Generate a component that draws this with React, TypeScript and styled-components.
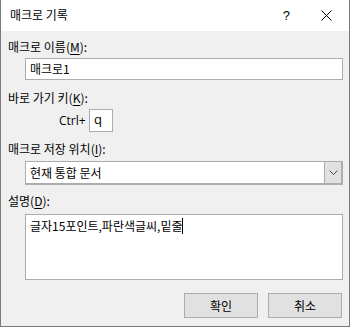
import React from 'react';
import styled, { createGlobalStyle } from 'styled-components';

// * global
const GlobalStyle = createGlobalStyle`
  html, body {
    margin: 0;
    padding: 0;
    background: #ffffff;
  }
  body {
    font-family: "Noto Sans CJK KR", "Noto Sans", sans-serif;
    font-size: 12px;
    color: #000000;
  }
`;

// * component
function App() {
  return (
    <>
      <GlobalStyle />
      <Window>
        <TitleBar>
          <Title>매크로 기록</Title>
          <TitleButtons>
            <HelpBtn>?</HelpBtn>
            <CloseBtn>
              <svg width='11' height='11' viewBox='0 0 11 11'>
                <path d='M0.5 0.5 L10.5 10.5 M10.5 0.5 L0.5 10.5' stroke='#000' strokeWidth='1' />
              </svg>
            </CloseBtn>
          </TitleButtons>
        </TitleBar>

        <Body>
          {/* 매크로 이름 */}
          <Label top={8}>
            매크로 이름(<u>M</u>):
          </Label>
          <TextBox top={3}>매크로1</TextBox>

          {/* 바로 가기 키 */}
          <Label top={10}>
            바로 가기 키(<u>K</u>):
          </Label>
          <ShortcutRow>
            <CtrlText>Ctrl+</CtrlText>
            <KeyBox>q</KeyBox>
          </ShortcutRow>

          {/* 저장 위치 */}
          <Label top={9}>
            매크로 저장 위치(<u>I</u>):
          </Label>
          <Select>
            <SelectValue>현재 통합 문서</SelectValue>
            <SelectArrow>
              <svg width='9' height='5' viewBox='0 0 9 5'>
                <path d='M0.5 0.5 L4.5 4.5 L8.5 0.5' stroke='#444' strokeWidth='1' fill='none' />
              </svg>
            </SelectArrow>
          </Select>

          {/* 설명 */}
          <Label top={8}>
            설명(<u>D</u>):
          </Label>
          <MemoBox>
            글자15포인트,파란색글씨,밑줄<Caret />
          </MemoBox>

          <ButtonRow>
            <Button>확인</Button>
            <Button>취소</Button>
          </ButtonRow>
        </Body>
      </Window>
    </>
  );
}
export default App;

// * styles
// 대화상자 창
const Window = styled.div`
  box-sizing: border-box;
  width: 350px;
  height: 327px;
  display: flex;
  flex-direction: column;
  background: #f0f0f0;
  border: 1px solid #7a7a7a;
  border-top: none;
`;
// 제목 표시줄
const TitleBar = styled.div`
  height: 31px;
  flex-shrink: 0;
  display: flex;
  align-items: center;
  justify-content: space-between;
  background: #ffffff;
  padding-left: 9px;
`;
const Title = styled.span`
  font-size: 12px;
  line-height: 16px;
  margin-top: -1px;
`;
const TitleButtons = styled.div`
  display: flex;
  align-items: center;
  height: 100%;
`;
const HelpBtn = styled.span`
  width: 47px;
  font-family: "Liberation Sans", sans-serif;
  font-size: 13px;
  text-align: right;
  padding-right: 13px;
  margin-top: -1px;
`;
const CloseBtn = styled.span`
  width: 46px;
  display: flex;
  justify-content: center;
  align-items: center;
  margin-top: -1px;
  svg {
    display: block;
  }
`;
// 본문
const Body = styled.div`
  flex: 1;
  display: flex;
  flex-direction: column;
  padding: 0 6px 0 7px;
`;
const Label = styled.div<{ top: number }>`
  margin-top: ${({ top }) => top}px;
  line-height: 16px;
  height: 16px;
  white-space: nowrap;
  u {
    text-underline-offset: 2px;
  }
`;
// 입력 상자
const TextBox = styled.div<{ top: number }>`
  box-sizing: border-box;
  margin: ${({ top }) => top}px 0 0 17px;
  height: 22px;
  border: 1px solid #adadad;
  background: #ffffff;
  padding-left: 4px;
  line-height: 20px;
`;
const ShortcutRow = styled.div`
  display: flex;
  align-items: center;
  margin-top: 3px;
  padding-left: 51px;
`;
const CtrlText = styled.span`
  font-family: "Open Sans", sans-serif;
  font-size: 12px;
  width: 30px;
`;
const KeyBox = styled.div`
  box-sizing: border-box;
  width: 24px;
  height: 23px;
  border: 1px solid #adadad;
  background: #ffffff;
  padding-left: 4px;
  line-height: 19px;
  font-family: "Open Sans", sans-serif;
  font-size: 13px;
`;
// 선택 상자
const Select = styled.div`
  box-sizing: border-box;
  display: flex;
  margin: 4px 0 0 17px;
  height: 24px;
  border: 2px solid #adadad;
  border-left-width: 1px;
  border-top-width: 1px;
  background: #ffffff;
`;
const SelectValue = styled.div`
  flex: 1;
  padding-left: 4px;
  line-height: 21px;
`;
const SelectArrow = styled.div`
  width: 16px;
  display: flex;
  align-items: center;
  justify-content: center;
  background: #e1e1e1;
  border-left: 1px solid #adadad;
`;
// 설명 상자
const MemoBox = styled.div`
  box-sizing: border-box;
  margin: 5px 0 0 17px;
  height: 66px;
  border: 1px solid #adadad;
  background: #ffffff;
  padding: 2px 4px;
  line-height: 17px;
  white-space: nowrap;
`;
const Caret = styled.span`
  display: inline-block;
  width: 1px;
  height: 16px;
  background: #000000;
  vertical-align: -3px;
`;
// 버튼
const ButtonRow = styled.div`
  display: flex;
  justify-content: flex-end;
  gap: 10px;
  margin-top: 13px;
  padding-right: 1px;
`;
const Button = styled.div`
  box-sizing: border-box;
  width: 74px;
  height: 25px;
  display: flex;
  align-items: center;
  justify-content: center;
  background: #e1e1e1;
  border: 1px solid #adadad;
`;
